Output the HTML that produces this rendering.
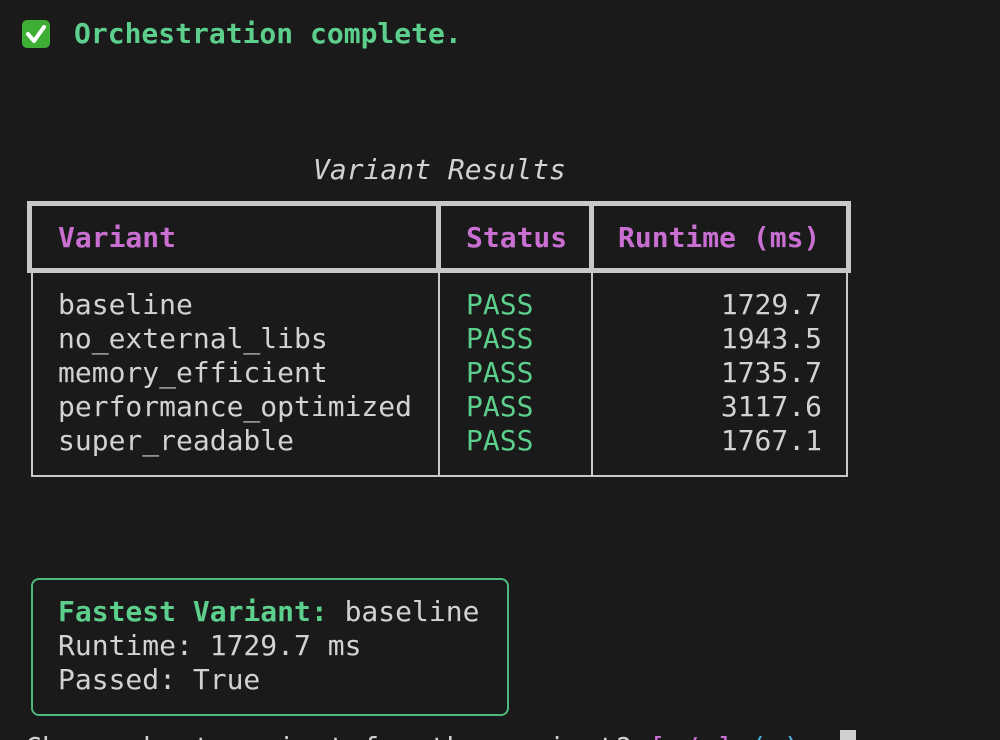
<!DOCTYPE html>
<html><head><meta charset="utf-8"><style>
html,body{margin:0;padding:0;background:#1a1a1a;width:1000px;height:740px;overflow:hidden}
body{position:relative;font-family:"DejaVu Sans Mono","Liberation Mono",monospace;font-size:28px;color:#d2d2d2}
.t{position:absolute;line-height:34px;white-space:pre}
.g{color:#5ccf8c}.m{color:#c96fd2}.b{font-weight:bold}
.ln{position:absolute;background:#c8c8c8}
</style></head><body>
<div class="t" style="left:22px;top:20px;width:28px;height:28px;background:#3fae35;border-radius:5px"></div>
<svg style="position:absolute;left:22px;top:20px" width="28" height="28"><path d="M6 14 L12 21 L22 7" stroke="#fff" stroke-width="4" fill="none" stroke-linecap="round" stroke-linejoin="round"/></svg>
<div class="t g b" style="left:74px;top:17px">Orchestration complete.</div>
<div class="t" style="left:313px;top:153px;font-style:italic">Variant Results</div>

<div style="position:absolute;left:27px;top:201px;width:814px;height:62px;border:5px solid #c8c8c8"></div>
<div class="ln" style="left:436px;top:201px;width:5px;height:72px"></div>
<div class="ln" style="left:589px;top:201px;width:5px;height:72px"></div>
<div class="t m b" style="left:58px;top:221px">Variant</div>
<div class="t m b" style="left:466px;top:221px">Status</div>
<div class="t m b" style="left:618px;top:221px">Runtime (ms)</div>

<div class="ln" style="left:31px;top:273px;width:2px;height:204px"></div>
<div class="ln" style="left:438px;top:273px;width:2px;height:204px"></div>
<div class="ln" style="left:591px;top:273px;width:2px;height:204px"></div>
<div class="ln" style="left:846px;top:273px;width:2px;height:204px"></div>
<div class="ln" style="left:31px;top:475px;width:817px;height:2px"></div>

<div class="t" style="left:58px;top:288px">baseline
no_external_libs
memory_efficient
performance_optimized
super_readable</div>
<div class="t g" style="left:466px;top:288px">PASS
PASS
PASS
PASS
PASS</div>
<div class="t" style="left:600px;top:288px;width:222px;text-align:right">1729.7
1943.5
1735.7
3117.6
1767.1</div>

<div style="position:absolute;left:31px;top:578px;width:474px;height:134px;border:2px solid #4fb87c;border-radius:8px"></div>
<div class="t" style="left:58px;top:595px"><span class="g b">Fastest Variant:</span> baseline
Runtime: 1729.7 ms
Passed: True</div>

<div class="t" style="left:25px;top:731px">Choose best variant for the project? <span class="m">[y/n]</span> <span style="color:#4ab0d8">(y)</span>: </div>
<div style="position:absolute;left:840px;top:730px;width:16px;height:12px;background:#d0d0d0"></div>
</body></html>
